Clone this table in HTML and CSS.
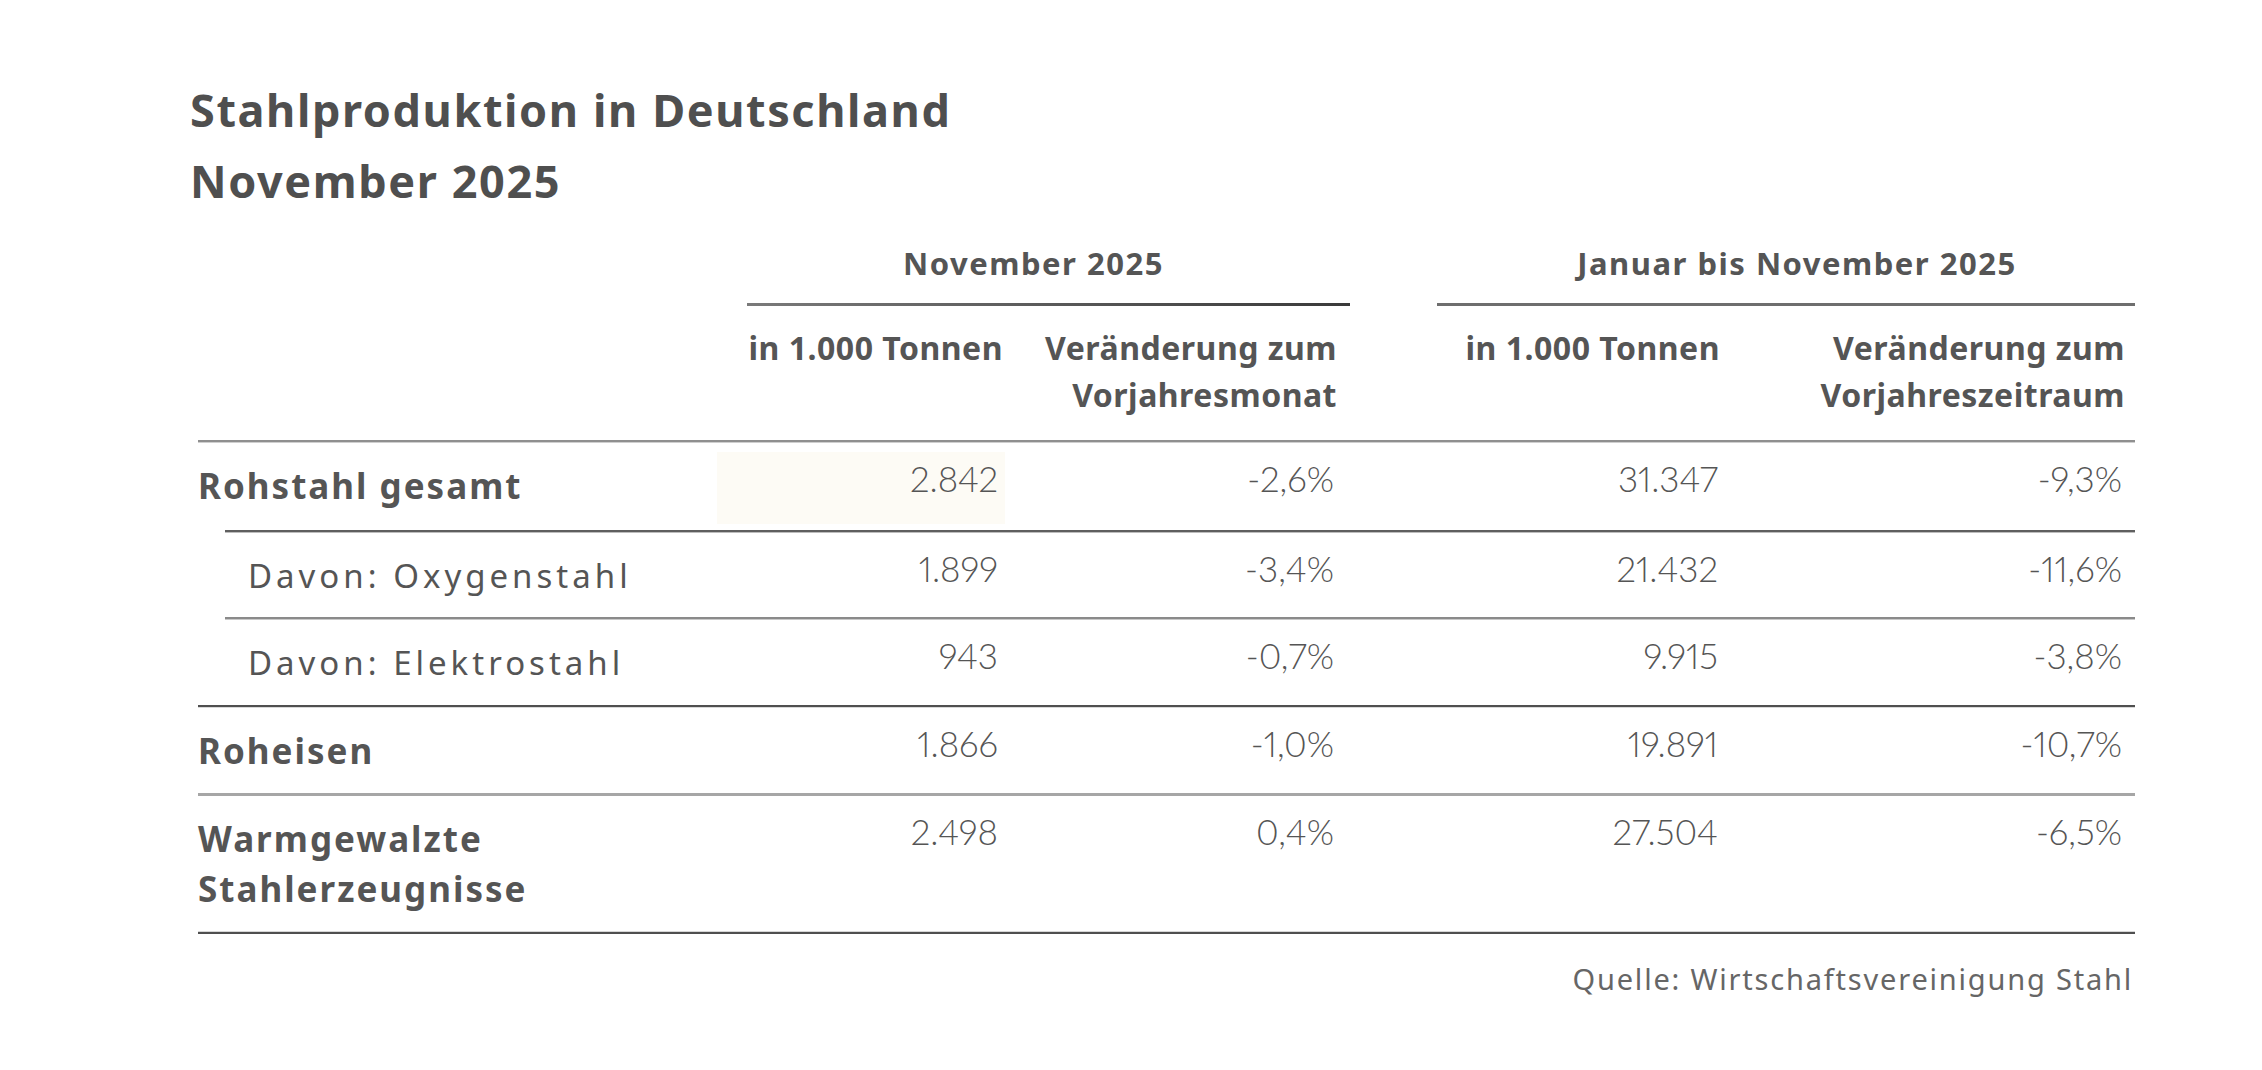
FILE: index.html
```html
<!DOCTYPE html>
<html lang="de">
<head>
<meta charset="utf-8">
<title>Stahlproduktion in Deutschland – November 2025</title>
<link rel="stylesheet" href="styles.css">
</head>
<body>
<div class="page">
  <h1 class="title">Stahlproduktion in Deutschland<br>November 2025</h1>

  <div class="table">
    <div class="row group-row">
      <div class="group nov">November 2025</div>
      <div class="group jan">Januar bis November 2025</div>
    </div>

    <div class="row sub-row">
      <div class="sub c2">in 1.000 Tonnen</div>
      <div class="sub c3">Veränderung zum<br>Vorjahresmonat</div>
      <div class="sub c5">in 1.000 Tonnen</div>
      <div class="sub c6">Veränderung zum<br>Vorjahreszeitraum</div>
    </div>

    <div class="row data-row r1">
      <div class="label bold">Rohstahl gesamt</div>
      <div class="num c2 hl">2.842</div>
      <div class="num c3">-2,6%</div>
      <div class="num c5">31.347</div>
      <div class="num c6">-9,3%</div>
    </div>

    <div class="row data-row r2 indent">
      <div class="label ind">Davon: Oxygenstahl</div>
      <div class="num c2">1.899</div>
      <div class="num c3">-3,4%</div>
      <div class="num c5">21.432</div>
      <div class="num c6">-11,6%</div>
    </div>

    <div class="row data-row r3 indent">
      <div class="label ind">Davon: Elektrostahl</div>
      <div class="num c2">943</div>
      <div class="num c3">-0,7%</div>
      <div class="num c5">9.915</div>
      <div class="num c6">-3,8%</div>
    </div>

    <div class="row data-row r4">
      <div class="label bold">Roheisen</div>
      <div class="num c2">1.866</div>
      <div class="num c3">-1,0%</div>
      <div class="num c5">19.891</div>
      <div class="num c6">-10,7%</div>
    </div>

    <div class="row data-row r5">
      <div class="label bold">Warmgewalzte<br>Stahlerzeugnisse</div>
      <div class="num c2">2.498</div>
      <div class="num c3">0,4%</div>
      <div class="num c5">27.504</div>
      <div class="num c6">-6,5%</div>
    </div>
  </div>

  <div class="source">Quelle: Wirtschaftsvereinigung Stahl</div>
</div>
</body>
</html>
```

FILE: styles.css
```css
html, body {
  margin: 0;
  background: #ffffff;
}

body {
  font-family: "Noto Sans", "DejaVu Sans", sans-serif;
  color: #555555;
}

.page {
  padding: 74px 0 0 190px;
}

.title {
  margin: 0;
  font-size: 45px;
  line-height: 71px;
  font-weight: 700;
  color: #4f4f4f;
  letter-spacing: 1.6px;
}

.table {
  width: 1937px;
  margin: 27px 0 0 8px;
}

.row {
  display: grid;
  grid-template-columns: 519px 288px 345px 87px 288px 410px;
}

/* ---------- group header ---------- */
.group {
  font-size: 31px;
  line-height: 40px;
  font-weight: 700;
  text-align: center;
  color: #555555;
  padding-bottom: 23px;
  letter-spacing: 1.5px;
}

.group.nov {
  grid-column: 2 / 4;
  background: linear-gradient(to right, #7a7a7a, #3a3a3a) no-repeat right bottom / calc(100% - 30px) 3px;
}

.group.jan {
  grid-column: 5 / 7;
  padding-left: 22px;
  background: linear-gradient(#6e6e6e, #6e6e6e) no-repeat left bottom / 100% 3px;
}

/* ---------- sub header ---------- */
.sub-row {
  padding: 18px 0 22px;
}

.sub {
  font-size: 32px;
  line-height: 47px;
  font-weight: 700;
  text-align: right;
  color: #555555;
  letter-spacing: 0.5px;
}

.c2 { grid-column: 2; }
.c3 { grid-column: 3; }
.c5 { grid-column: 5; }
.c6 { grid-column: 6; }

.sub.c2 { padding-right: 2px; }
.sub.c3 { padding-right: 13px; }
.sub.c5 { padding-right: 5px; }
.sub.c6 { padding-right: 10px; }

/* ---------- data rows ---------- */
.data-row {
  --x: 0px;
  --l1: #666666;
  --l2: #c4c4c4;
  padding: 21px 0 17px;
  background: linear-gradient(to bottom, var(--l1) 0 2px, var(--l2) 2px 3px) no-repeat var(--x) 0 / calc(100% - var(--x)) 3px;
}

.data-row.indent {
  --x: 27px;
}

.r1 { --l1: #8f8f8f; --l2: #cfcfcf; padding-bottom: 19px; }
.r2 { --l1: #5f5f5f; --l2: #bdbdbd; padding-bottom: 16px; }
.r3 { --l1: #8a8a8a; --l2: #c8c8c8; }
.r4 { --l1: #4f4f4f; --l2: #d8d8d8; }
.r5 {
  padding-bottom: 20px;
  background:
    linear-gradient(#a6a6a6, #a6a6a6) no-repeat 0 0 / 100% 3px,
    linear-gradient(to bottom, #d6d6d6 0 1px, #4f4f4f 1px 3px) no-repeat 0 100% / 100% 3px;
}

.label {
  grid-column: 1;
  align-self: center;
  font-size: 33px;
  line-height: 50px;
  font-weight: 400;
  letter-spacing: 4px;
  color: #555555;
}

.label.bold {
  font-size: 35px;
  font-weight: 700;
  letter-spacing: 2px;
}

.label.ind {
  padding-left: 50px;
}

.num {
  text-align: right;
  font-family: "Lato", "Noto Sans", sans-serif;
  font-size: 35px;
  line-height: 35px;
  font-weight: 300;
  font-variant-numeric: proportional-nums;
  color: #555555;
}

.num.c2 { padding-right: 7px; }
.num.c3 { padding-right: 16px; }
.num.c5 { padding-right: 7px; }
.num.c6 { padding-right: 13px; }

.num.hl {
  background: #fdfbf5;
  margin: -9px 0 -13px;
  padding-top: 9px;
}

/* ---------- source ---------- */
.source {
  width: 1935px;
  margin: 27px 0 0 8px;
  padding-right: 2px;
  text-align: right;
  font-size: 29px;
  line-height: 36px;
  letter-spacing: 1.8px;
  color: #666666;
}
```
